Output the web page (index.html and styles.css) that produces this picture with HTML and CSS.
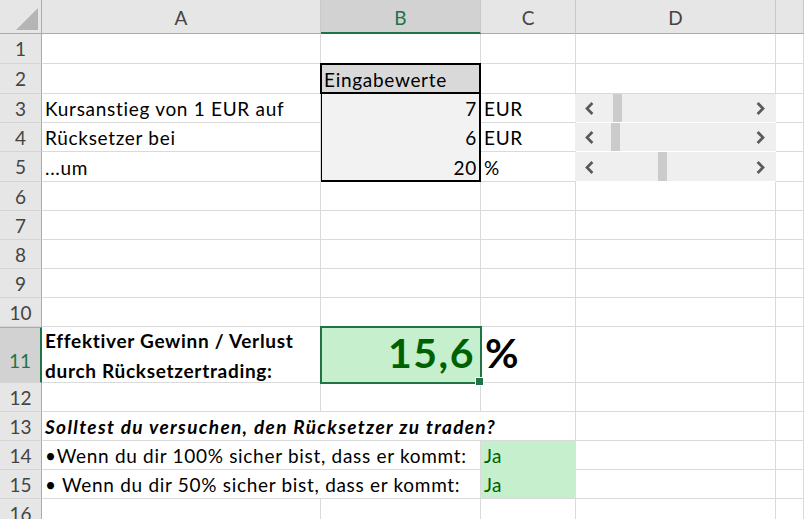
FILE: index.html
```html
<!DOCTYPE html>
<html lang="de">
<head>
<meta charset="utf-8">
<title>Rücksetzertrading</title>
<link rel="stylesheet" href="styles.css">
</head>
<body>
<div class="sheet">
  <div class="corner"><svg class="tri" width="22" height="22" viewBox="0 0 22 22"><polygon points="22,0 22,22 0,22" fill="#b5b5b5"/></svg></div>
  <div class="ch">A</div>
  <div class="ch sel">B</div>
  <div class="ch">C</div>
  <div class="ch">D</div>
  <div class="ch"></div>

  <div class="rh">1</div><div class="c"></div><div class="c"></div><div class="c"></div><div class="c"></div><div class="c"></div>

  <div class="rh">2</div><div class="c"></div>
  <div class="inbox">
    <div class="in-head">Eingabewerte</div>
    <div class="in-val r3">7</div>
    <div class="in-val r4">6</div>
    <div class="in-val r5">20</div>
  </div>
  <div class="c"></div><div class="c"></div><div class="c"></div>

  <div class="rh">3</div><div class="c">Kursanstieg von 1 EUR auf</div><div class="c sbl">EUR</div>
  <div class="c sbc"><div class="scroll"><svg class="chev" width="9" height="13" viewBox="0 0 9 13"><polyline points="7.4,1 2,6.5 7.4,12" fill="none" stroke="#5a5a5a" stroke-width="2.7"/></svg><div class="thumb" style="left:37px"></div><svg class="chev" width="9" height="13" viewBox="0 0 9 13"><polyline points="1.6,1 7,6.5 1.6,12" fill="none" stroke="#5a5a5a" stroke-width="2.7"/></svg></div></div>
  <div class="c"></div>

  <div class="rh">4</div><div class="c">Rücksetzer bei</div><div class="c sbl">EUR</div>
  <div class="c sbc"><div class="scroll"><svg class="chev" width="9" height="13" viewBox="0 0 9 13"><polyline points="7.4,1 2,6.5 7.4,12" fill="none" stroke="#5a5a5a" stroke-width="2.7"/></svg><div class="thumb" style="left:35px"></div><svg class="chev" width="9" height="13" viewBox="0 0 9 13"><polyline points="1.6,1 7,6.5 1.6,12" fill="none" stroke="#5a5a5a" stroke-width="2.7"/></svg></div></div>
  <div class="c"></div>

  <div class="rh">5</div><div class="c">...um</div><div class="c sbl">%</div>
  <div class="c sbc"><div class="scroll"><svg class="chev" width="9" height="13" viewBox="0 0 9 13"><polyline points="7.4,1 2,6.5 7.4,12" fill="none" stroke="#5a5a5a" stroke-width="2.7"/></svg><div class="thumb" style="left:82px"></div><svg class="chev" width="9" height="13" viewBox="0 0 9 13"><polyline points="1.6,1 7,6.5 1.6,12" fill="none" stroke="#5a5a5a" stroke-width="2.7"/></svg></div></div>
  <div class="c"></div>

  <div class="rh">6</div><div class="c"></div><div class="c"></div><div class="c"></div><div class="c"></div><div class="c"></div>
  <div class="rh">7</div><div class="c"></div><div class="c"></div><div class="c"></div><div class="c"></div><div class="c"></div>
  <div class="rh">8</div><div class="c"></div><div class="c"></div><div class="c"></div><div class="c"></div><div class="c"></div>
  <div class="rh">9</div><div class="c"></div><div class="c"></div><div class="c"></div><div class="c"></div><div class="c"></div>
  <div class="rh">10</div><div class="c"></div><div class="c"></div><div class="c"></div><div class="c"></div><div class="c"></div>

  <div class="rh sel">11</div>
  <div class="c label2">Effektiver Gewinn / Verlust<br>durch Rücksetzertrading:</div>
  <div class="c result">15,6</div>
  <div class="c pct">%</div>
  <div class="c"></div><div class="c"></div>

  <div class="rh">12</div><div class="c"></div><div class="c"></div><div class="c"></div><div class="c"></div><div class="c"></div>

  <div class="rh">13</div><div class="c span3 q">Solltest du versuchen, den Rücksetzer zu traden?</div><div class="c"></div><div class="c"></div>

  <div class="rh">14</div><div class="c span2">•Wenn du dir 100% sicher bist, dass er kommt:</div><div class="c good g1">Ja</div><div class="c"></div><div class="c"></div>
  <div class="rh">15</div><div class="c span2">• Wenn du dir 50% sicher bist, dass er kommt:</div><div class="c good g2">Ja</div><div class="c"></div><div class="c"></div>

  <div class="rh last">16</div><div class="c"></div><div class="c"></div><div class="c"></div><div class="c"></div><div class="c"></div>
</div>
</body>
</html>
```

FILE: styles.css
```css
* { box-sizing: border-box; }
html, body { margin: 0; padding: 0; }
body {
  width: 804px;
  height: 519px;
  overflow: hidden;
  background: #fff;
  font-family: Lato, "Liberation Sans", sans-serif;
  font-size: 19px;
  color: #000;
}
.sheet {
  display: grid;
  grid-template-columns: 42px 279px 160px 95px 200px 1fr;
  grid-template-rows: 34px 30px 30px 29px 29px 30px 29px 29px 29px 29px 29px 56px 29px 29px 29px 29px 1fr;
  height: 519px;
}
.c {
  border-right: 1px solid #dadada;
  border-bottom: 1px solid #dadada;
  display: flex;
  align-items: flex-end;
  padding: 0 3px 2px;
  line-height: 23px;
  letter-spacing: 0.7px;
  white-space: nowrap;
  min-width: 0;
}
.corner {
  background: #e6e6e6;
  border-right: 1px solid #ababab;
  border-bottom: 1px solid #ababab;
  display: flex;
  align-items: flex-end;
  justify-content: flex-end;
  padding: 0 3px 3px 0;
}
.tri { display: block; }
.ch {
  background: #e6e6e6;
  border-right: 1px solid #c9c9c9;
  border-bottom: 1px solid #ababab;
  display: flex;
  align-items: center;
  justify-content: center;
  color: #444;
  line-height: 23px;
  padding-top: 1px;
}
.ch.sel {
  background: #d2d2d2;
  color: #217346;
  border-bottom: 2px solid #217346;
  padding-top: 2px;
}
.rh {
  background: #e6e6e6;
  border-right: 1px solid #ababab;
  border-bottom: 1px solid #d4d4d4;
  display: flex;
  align-items: center;
  justify-content: center;
  color: #444;
  line-height: 23px;
}
.rh.sel {
  background: #d2d2d2;
  color: #217346;
  border-right: 2px solid #217346;
  border-top: 1px solid #ababab;
  align-items: flex-end;
  padding-bottom: 10px;
}
.rh.last { align-items: flex-start; padding-top: 3px; }

/* input block B2:B5 */
.inbox {
  grid-row: span 4;
  margin: -1px 0 0 -1px;
  border: 2px solid #000;
  display: grid;
  grid-template-rows: 29px 29px 29px 28px;
  line-height: 23px;
  letter-spacing: 0.7px;
}
.in-head {
  background: #d9d9d9;
  border-bottom: 2px solid #000;
  display: flex;
  align-items: flex-end;
  padding: 0 2px 1px;
}
.in-val {
  background: #f2f2f2;
  display: flex;
  align-items: flex-end;
  justify-content: flex-end;
  padding: 0 2px 3px;
}
.in-val.r5 { padding-bottom: 1px; }

/* scrollbars */
.sbl { border-right-color: #efefef; }
.sbc { padding: 0; border-bottom-color: #fff; border-right-color: #efefef; align-items: stretch; }
.scroll {
  flex: 1;
  position: relative;
  background: #efefef;
  display: flex;
  align-items: center;
  justify-content: space-between;
  padding: 1px 10px 0 9px;
}
.chev { display: block; }
.thumb {
  position: absolute;
  top: 0;
  bottom: 0;
  width: 9px;
  background: #cbcbcb;
}

/* row 11 */
.label2 {
  font-weight: 700;
  line-height: 30px;
  align-items: center;
  padding-top: 2px;
  padding-bottom: 0;
  white-space: normal;
}
.result {
  position: relative;
  background: #c6efce;
  color: #006100;
  font-weight: 700;
  font-size: 41px;
  line-height: 41px;
  letter-spacing: 1.5px;
  justify-content: flex-end;
  padding: 0 5px 9px 3px;
  outline: 2px solid #217346;
  outline-offset: -1px;
}
.result::after {
  content: "";
  position: absolute;
  right: -4px;
  bottom: -4px;
  width: 7px;
  height: 7px;
  background: #217346;
  border: 1px solid #fff;
}
.pct {
  font-weight: 700;
  font-size: 41px;
  line-height: 41px;
  letter-spacing: 0;
  padding: 0 3px 9px 4px;
}

/* rows 13-15 */
.span3 { grid-column: span 3; }
.span2 { grid-column: span 2; }
.q { font-weight: 700; font-style: italic; letter-spacing: 1.35px; }
.good {
  background: #c6efce;
  color: #006100;
  border-right-color: #c6efce;
  padding-left: 3px;
  letter-spacing: 0.3px;
}
.g1 { border-bottom-color: #c6efce; }
.g2 { border-bottom-color: #dadada; }
```
